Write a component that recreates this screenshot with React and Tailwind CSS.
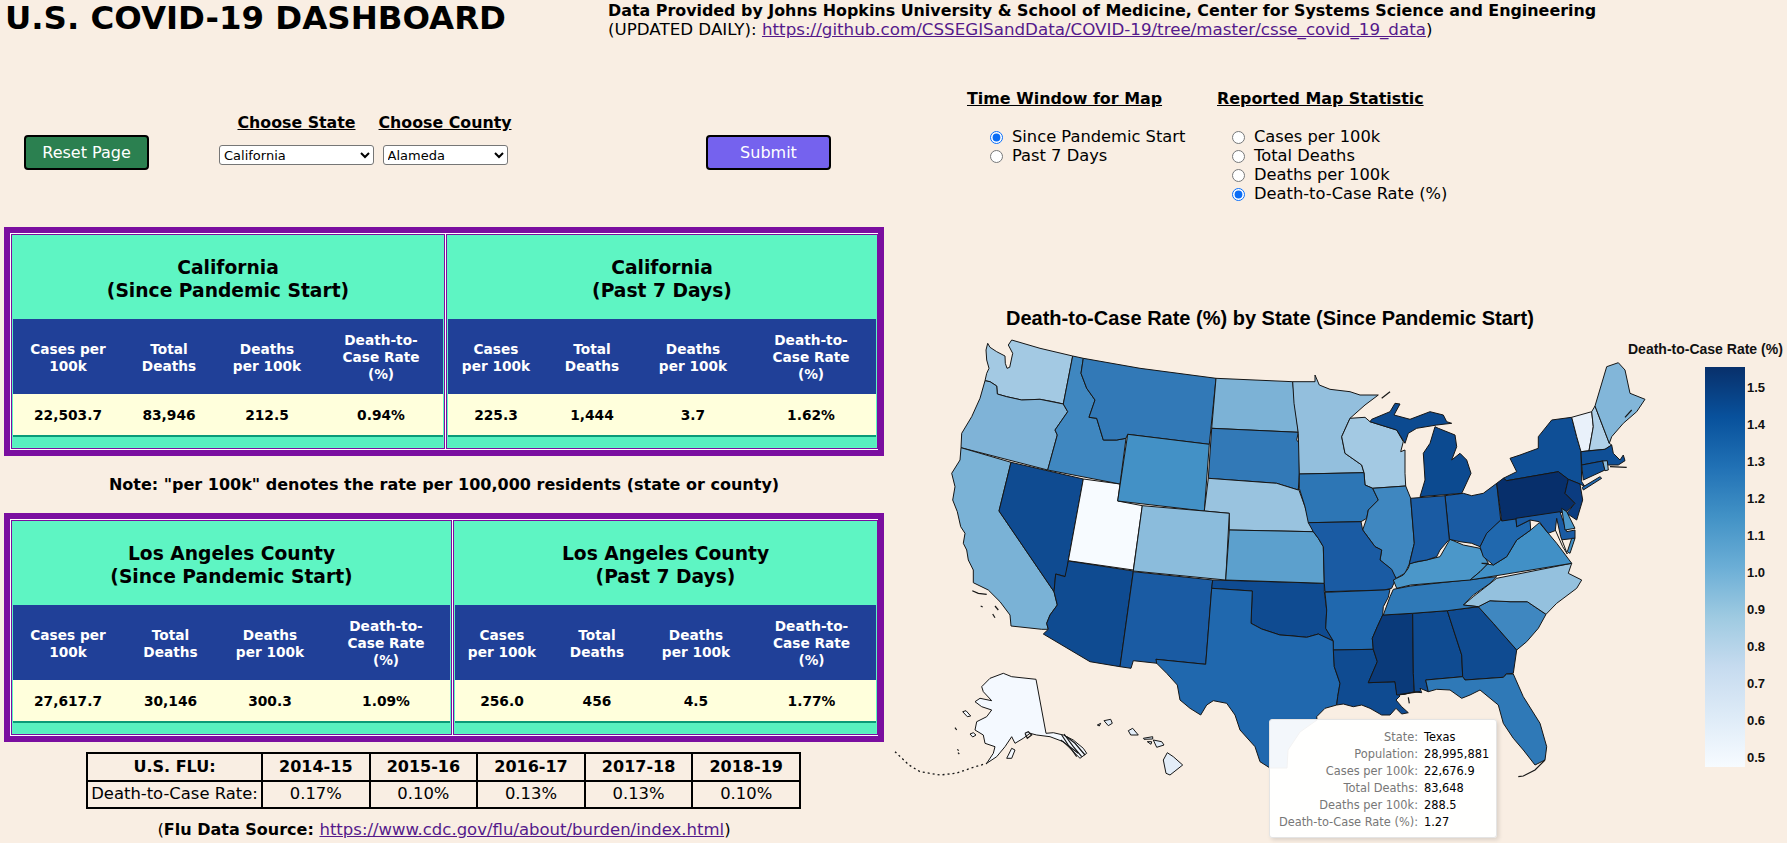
import React from "react";

const origins = { A: [940, 330], B: [1290, 330], C: [940, 560], D: [1290, 560] };

// outlines were traced on four crops of the map, the letter says which crop
const toPoints = (s) => {
    let o = origins.A;
    const out = [];
    s.trim().split(/\s+/).forEach((t) => {
        if (origins[t]) {
            o = origins[t];
        } else {
            const [x, y] = t.split(",").map(Number);
            out.push(`${(o[0] + x / 3).toFixed(1)},${(o[1] + y / 3).toFixed(1)}`);
        }
    });
    return out.join(" ");
};

const states = [
    ["#a3c9e3", "A 143,40 150,52 170,65 195,78 196,100 201,115 209,112 218,70 205,45 215,30 300,55 398,78 370,222 340,215 300,208 245,210 200,200 172,192 170,168 150,155 135,152 140,130 147,115 140,90 138,60"],
    ["#7fb3d7", "A 135,152 150,155 170,168 172,192 200,200 245,210 300,208 370,222 383,245 345,300 352,315 323,420 63,353 65,310 95,260 120,205"],
    ["#7ab2d6", "A 63,353 213,397 177,543 C 342,95 352,135 330,165 320,190 325,208 305,208 213,198 210,165 180,125 145,90 100,68 100,30 85,0 A 80,660 70,640 75,610 62,590 52,545 38,510 45,470 35,430 60,390"],
    ["#0f4b91", "A 213,397 430,447 385,692 C 378,50 347,42 342,95 A 177,543"],
    ["#f7fbff", "A 430,447 540,462 533,513 607,527 580,720 385,692"],
    ["#0f4b91", "C 385,3 580,33 540,320 450,305 310,222 325,208 320,190 330,165 352,135 342,95 347,42 375,50"],
    ["#1a5ba3", "C 580,35 818,60 815,85 797,313 648,298 652,310 580,302 573,325 540,320"],
    ["#0f4b91", "C 818,60 D 103,70 103,95 110,150 107,205 130,243 85,222 50,232 0,227 C 1020,225 965,207 933,190 937,93 815,85"],
    ["#2068ae", "C 815,85 937,93 933,190 965,207 1020,225 D 0,227 50,232 85,222 130,243 133,320 150,370 143,410 140,435 105,445 80,470 A 1131,1170 1080,1206 1044,1260 1041,1314 990,1314 C 960,605 945,560 900,510 885,465 860,430 820,422 800,435 782,465 750,445 720,420 712,375 680,340 650,310 648,298 797,313"],
    ["#3f87c0", "A 398,78 430,85 423,130 440,175 465,210 447,262 470,265 490,330 530,330 558,325 540,462 323,420 352,315 345,300 383,245 370,222"],
    ["#3279b7", "A 430,85 600,115 828,145 808,343 563,313 558,325 530,330 490,330 470,265 447,262 465,210 440,175 423,130"],
    ["#4391c6", "A 563,313 808,343 793,543 533,513"],
    ["#7cb2d6", "A 828,145 1058,155 1065,220 1075,307 815,295"],
    ["#3279b7", "A 815,295 1075,307 1070,330 1078,340 1078,430 1075,480 1010,460 805,445"],
    ["#99c3df", "A 805,445 1010,460 1075,480 B 25,475 45,530 70,605 A 868,600 868,550 793,543"],
    ["#8bbcdc", "A 607,527 793,543 868,550 C 857,60 580,33"],
    ["#5ca0cd", "A 868,600 B 70,605 85,625 100,650 D 103,70 C 857,60"],
    ["#93bfdd", "B 8,155 75,155 75,135 88,165 120,178 180,185 210,195 265,195 225,225 180,265 155,320 165,370 215,405 222,428 28,432 25,310 12,220"],
    ["#a3c9e3", "B 180,265 225,262 240,275 320,300 340,335 332,365 345,360 345,430 347,468 248,475 225,465 222,428 215,405 165,370 155,320"],
    ["#2d76b5", "B 28,432 222,428 225,465 248,475 265,510 235,540 230,565 213,575 55,578 45,530 28,475"],
    ["#3f87c0", "B 248,475 347,468 362,505 373,640 358,702 D 358,12 345,40 318,55 300,25 270,0 B 270,690 275,660 255,650 218,600 230,565 235,540 265,510"],
    ["#1a5ba3", "B 55,578 213,575 218,600 255,650 275,660 270,690 305,718 D 318,55 305,85 282,90 105,95 103,70 B 100,650 85,625 70,605"],
    ["#2068ae", "D 105,97 282,90 300,88 295,112 280,140 278,165 262,200 247,235 250,268 130,270 130,243 107,205 110,150"],
    ["#0f4b91", "D 130,270 250,268 262,305 235,368 315,365 320,395 330,408 318,420 335,440 355,458 335,462 318,445 300,465 275,465 240,445 215,435 190,440 160,432 140,435 143,410 150,370 133,320"],
    ["#0a3a7a", "D 278,165 368,160 370,340 373,395 345,403 320,405 315,365 235,368 262,305 250,268 247,235 262,200"],
    ["#0f4b91", "D 368,160 472,152 515,285 518,350 407,360 415,395 390,385 395,398 373,395 370,340"],
    ["#0f4b91", "D 472,152 565,140 610,190 680,270 670,340 648,342 640,352 525,360 518,350 515,285"],
    ["#2f79b7", "D 407,360 518,350 525,360 640,352 650,342 670,342 700,410 750,490 770,560 765,600 735,615 700,570 670,535 640,490 625,435 570,390 540,405 515,415 480,390 440,388 415,395"],
    ["#3f87c0", "D 565,140 600,122 660,125 712,125 768,163 745,205 710,245 680,270 610,190"],
    ["#94c1de", "D 520,135 550,110 620,55 845,10 835,40 875,60 860,85 800,130 768,163 712,125 660,125 600,122 565,140"],
    ["#2f79b7", "D 280,165 300,110 310,88 362,78 620,50 600,70 550,105 520,135 565,140 472,152 368,160"],
    ["#4b97c9", "D 320,85 362,75 540,60 570,35 595,10 B 570,655 520,645 480,628 450,680 410,690 360,700 355,715 D 340,45 320,55 310,60"],
    ["#4190c6", "D 540,60 845,10 B 845,700 800,640 775,610 748,578 722,600 680,630 650,680 610,705 575,700 D 595,10 570,35"],
    ["#2068ae", "B 570,650 590,605 632,570 678,565 680,590 720,570 722,600 680,630 650,680 610,705 580,680"],
    ["#1a5ba3", "B 465,497 520,490 545,497 580,490 620,460 632,570 590,610 570,650 545,640 510,635 478,628"],
    ["#1a5ba3", "B 362,505 465,497 478,628 450,660 440,680 410,690 380,695 358,702 373,640"],
    ["#0c4a90", "B 390,500 405,450 400,370 420,340 435,290 445,295 495,315 500,350 485,390 510,370 530,390 543,430 520,480 515,490"],
    ["#0c4a90", "B 245,268 300,245 315,220 330,222 312,255 360,268 420,245 460,255 470,275 485,280 440,285 380,295 355,310 345,340 320,300 240,275"],
    ["#0f4f96", "B 640,445 680,425 660,385 690,375 745,355 745,320 785,270 845,262 860,320 873,365 875,455 885,470 870,462 835,448 805,425 650,452"],
    ["#072f6b", "B 620,460 640,445 650,452 805,425 835,448 825,490 855,520 830,545 635,573"],
    ["#0b3c80", "B 835,448 870,462 878,510 860,570 830,550 855,520 825,490"],
    ["#e9f1fa", "B 845,262 905,245 910,290 897,362 873,365 860,320"],
    ["#b0d0e8", "B 905,245 915,228 958,340 965,345 945,358 897,362 910,290"],
    ["#82b6d9", "B 915,228 950,110 985,98 1005,120 1020,190 1065,208 1040,245 1000,280 965,320 958,340"],
    ["#0f4f96", "B 873,365 945,358 965,345 970,370 990,390 1000,375 1005,392 985,405 955,405 938,393 875,405"],
    ["#0f4f96", "B 875,405 938,393 945,420 880,450"],
    ["#8cbcdc", "B 938,393 952,392 955,420 945,422"],
    ["#2068ae", "B 877,472 930,440 935,445 880,480"],
    ["#1a5ba3", "B 678,565 810,545 830,605 855,600 855,625 810,630 800,600 775,610 748,575 720,570 680,590"],
    ["#4b97c9", "B 815,535 830,545 855,595 825,600"],
    ["#4190c6", "B 832,665 845,625 855,625 840,670"],
    ["#f9eee3", "B 800,565 812,620 832,672 818,650 796,600"],
    // alaska and hawaii
    ["#f4f9ff", "C 125,380 150,355 190,340 215,350 288,358 318,520 340,518 370,525 400,540 430,565 440,580 420,595 395,570 370,545 330,530 290,525 270,520 250,535 225,550 215,530 195,560 170,590 140,610 160,580 165,560 135,550 130,525 105,510 110,485 140,470 155,450 125,440 105,425 120,415 155,422 130,395"],
    ["#f4f9ff", "C 200,595 215,565 225,570 215,595"],
    ["#f4f9ff", "C 68,455 78,452 92,468 82,470"],
    ["#f4f9ff", "C 90,522 100,518 108,525 98,531"],
    ["#e3edf8", "C 670,600 682,578 700,590 728,615 690,645 678,640"],
    ["#e3edf8", "C 640,540 665,545 672,555 650,562"],
    ["#e3edf8", "C 492,482 512,478 517,490 505,497"],
    ["#e3edf8", "C 565,512 578,505 595,525 572,525"],
    ["#e3edf8", "C 610,535 638,530 638,537 612,538"],
    ["#e3edf8", "C 622,545 635,545 633,553"],
    ["#e3edf8", "C 472,495 482,490 478,498"],
];

// dark scribbles: islands and broken coast that are mostly outline
const scribbles = [
    "C 365,525 385,555 410,590",
    "C 372,522 400,560 425,590",
    "C 380,530 405,550 435,585",
    "C 362,540 395,565 415,580",
    "C 255,520 265,515 275,525 262,535 255,520",
    "C 97,92 115,100 140,103",
    "C 122,138 128,141",
    "C 165,138 175,150",
    "C 158,162 165,173",
    "C 45,503 50,510",
    "C 52,568 56,572",
    "C 54,578 58,582",
    "D 685,650 700,648 735,630 765,600",
    "D 330,403 390,395",
    "B 1005,262 1025,240",
    "D 355,412 358,430",
    "B 275,205 300,185",
    "B 960,410 1010,412",
];

const chain = "C -135,575 -93,615 -60,635 0,645 48,640 100,622 141,610";

const ticks = ["1.5", "1.4", "1.3", "1.2", "1.1", "1.0", "0.9", "0.8", "0.7", "0.6", "0.5"];

const blues = ["#f7fbff", "#deebf7", "#c6dbef", "#9ecae1", "#6baed6", "#4292c6", "#2171b5", "#08519c", "#08306b"];

function UsMap() {
    return (
        <svg width="899" height="543" viewBox="888 300 899 543" className="block">
            <defs>
                <linearGradient id="bar" x1="0" y1="1" x2="0" y2="0">
                    {blues.map((c, i) => (
                        <stop key={c} offset={i / 8} stopColor={c} />
                    ))}
                </linearGradient>
            </defs>
            <text x="1006" y="325" fontFamily="Liberation Sans, sans-serif" fontWeight="700" fontSize="20" fill="#000">
                Death-to-Case Rate (%) by State (Since Pandemic Start)
            </text>
            {states.map(([fill, outline], i) => (
                <polygon key={i} points={toPoints(outline)} fill={fill} stroke="#161616" strokeWidth="1" strokeLinejoin="round" />
            ))}
            {scribbles.map((s, i) => (
                <polyline key={i} points={toPoints(s)} fill="none" stroke="#161616" strokeWidth="1.2" />
            ))}
            <polyline points={toPoints(chain)} fill="none" stroke="#161616" strokeWidth="1.3" strokeDasharray="2 3" />
            <text x="1628" y="354" fontFamily="Liberation Sans, sans-serif" fontWeight="700" fontSize="14" fill="#111">
                Death-to-Case Rate (%)
            </text>
            <rect x="1705" y="367" width="40" height="400" fill="url(#bar)" />
            {ticks.map((t, i) => (
                <text key={t} x="1747" y={392 + i * 37} fontFamily="Liberation Sans, sans-serif" fontWeight="700" fontSize="13" fill="#111">
                    {t}
                </text>
            ))}
        </svg>
    );
}

const tooltipRows = [
    ["State:", "Texas"],
    ["Population:", "28,995,881"],
    ["Cases per 100k:", "22,676.9"],
    ["Total Deaths:", "83,648"],
    ["Deaths per 100k:", "288.5"],
    ["Death-to-Case Rate (%):", "1.27"],
];

function Tooltip() {
    return (
        <div className="absolute left-[381px] top-[419px] w-[228px] h-[119px] bg-white/95 rounded-[3px] border border-[#e4e4e4] shadow-[2px_2px_4px_rgba(0,0,0,0.12)] pt-[9px] pl-[8px]">
            <div className="grid grid-cols-[140px_auto] gap-x-[6px] text-[11.4px] leading-[17px]">
                {tooltipRows.map(([k, v]) => (
                    <React.Fragment key={k}>
                        <div className="text-right text-[#777] whitespace-nowrap">{k}</div>
                        <div className="text-black whitespace-nowrap">{v}</div>
                    </React.Fragment>
                ))}
            </div>
        </div>
    );
}

const headers = {
    sinceA: ["Cases per\n100k", "Total\nDeaths", "Deaths\nper 100k", "Death-to-\nCase Rate\n(%)"],
    weekA: ["Cases\nper 100k", "Total\nDeaths", "Deaths\nper 100k", "Death-to-\nCase Rate\n(%)"],
};

function Panel({ title, sub, cols, heads, values, width }) {
    return (
        <div className={`${width} border border-[#7b0ea0] bg-[#5ef5c3] p-px`}>
            <div className="h-[83px] pt-[20px] text-center text-[18.7px] leading-[23px] font-bold text-black">
                {title}
                <br />
                {sub}
            </div>
            <div className={`grid ${cols} h-[75px] pt-[2px] bg-[#204098] text-white text-[13.7px] leading-[17px] font-bold text-center`}>
                {heads.map((h, i) => (
                    <div key={i} className="flex items-center justify-center whitespace-pre-line">
                        {h}
                    </div>
                ))}
            </div>
            <div className={`grid ${cols} h-[41px] pt-[2px] bg-[#ffffdc] text-black text-[13.8px] font-bold text-center`}>
                {values.map((v, i) => (
                    <div key={i} className="flex items-center justify-center">
                        {v}
                    </div>
                ))}
            </div>
            <div className="h-[2px] bg-[#0a9a78]"></div>
            <div className="h-[10px] bg-[#58f0bf]"></div>
        </div>
    );
}

function StatBox({ children }) {
    return (
        <div className="ml-[4px] w-[880px] border-[6px] border-[#7b0ea0] bg-white p-px flex gap-px">
            {children}
        </div>
    );
}

const fluYears = [
    ["2014-15", "0.17%"],
    ["2015-16", "0.10%"],
    ["2016-17", "0.13%"],
    ["2017-18", "0.13%"],
    ["2018-19", "0.10%"],
];

function FluTable() {
    return (
        <table className="ml-[86px] mt-[10px] w-[715px] table-fixed border-collapse text-black">
            <thead>
                <tr className="h-[28px] text-[16px]">
                    <th className="w-[175px] border-2 border-black font-bold">U.S. FLU:</th>
                    {fluYears.map(([y]) => (
                        <th key={y} className="border-2 border-black font-bold">
                            {y}
                        </th>
                    ))}
                </tr>
            </thead>
            <tbody>
                <tr className="h-[27px] text-[16.4px]">
                    <td className="border-2 border-black text-center whitespace-nowrap">Death-to-Case Rate:</td>
                    {fluYears.map(([y, v]) => (
                        <td key={y} className="border-2 border-black text-center">
                            {v}
                        </td>
                    ))}
                </tr>
            </tbody>
        </table>
    );
}

function Radio({ name, label, checked }) {
    return (
        <label className="flex items-center h-[19px] whitespace-nowrap text-[16.3px]">
            <input type="radio" name={name} defaultChecked={checked} className="w-[13px] h-[13px] mr-[9.5px] accent-[#0a6cf5]" />
            {label}
        </label>
    );
}

export default function App() {
    return (
        <div className="w-[1787px] h-[843px] overflow-hidden bg-[#f9eee3] text-black font-['DejaVu_Sans',Verdana,sans-serif]">
            <header className="flex h-[48px]">
                <h1 className="ml-[5px] w-[603px] text-[32.4px] leading-[37px] font-bold whitespace-nowrap">U.S. COVID-19 DASHBOARD</h1>
                <p className="mt-px text-[16.7px] leading-[19px] whitespace-nowrap">
                    <b className="text-[15.9px]">Data Provided by Johns Hopkins University &amp; School of Medicine, Center for Systems Science and Engineering</b>
                    <br />
                    (UPDATED DAILY):{" "}
                    <a href="#" className="text-[#551a8b] underline">
                        https://github.com/CSSEGISandData/COVID-19/tree/master/csse_covid_19_data
                    </a>
                    )
                </p>
            </header>
            <div className="flex">
                <div className="w-[888px]">
                    <div className="flex items-start h-[179px]">
                        <button className="ml-[24px] mt-[87px] w-[125px] h-[35px] pt-px bg-[#2b8050] border-2 border-black rounded-[4px] text-white text-[16px]">
                            Reset Page
                        </button>
                        <div className="ml-[70px] mt-[65px] w-[155px] flex flex-col items-center gap-[13px]">
                            <span className="text-[15.8px] leading-[19px] font-bold underline whitespace-nowrap">Choose State</span>
                            <select defaultValue="California" className="w-[155px] h-[20px] bg-white border border-[#767676] rounded-[3px] text-[13px]">
                                <option>California</option>
                                <option>Texas</option>
                            </select>
                        </div>
                        <div className="ml-[5px] mt-[65px] w-[132px] flex flex-col items-center gap-[13px]">
                            <span className="text-[15.8px] leading-[19px] font-bold underline whitespace-nowrap">Choose County</span>
                            <select defaultValue="Alameda" className="w-[125px] h-[20px] bg-white border border-[#767676] rounded-[3px] text-[13px]">
                                <option>Alameda</option>
                                <option>Los Angeles</option>
                            </select>
                        </div>
                        <button className="ml-[195px] mt-[87px] w-[125px] h-[35px] pt-px bg-[#7562ee] border-2 border-black rounded-[4px] text-white text-[16px]">
                            Submit
                        </button>
                    </div>
                    <StatBox>
                        <Panel
                            width="w-[434px]"
                            title="California"
                            sub="(Since Pandemic Start)"
                            cols="grid-cols-[110px_92px_104px_124px]"
                            heads={headers.sinceA}
                            values={["22,503.7", "83,946", "212.5", "0.94%"]}
                        />
                        <Panel
                            width="w-[432px]"
                            title="California"
                            sub="(Past 7 Days)"
                            cols="grid-cols-[96px_96px_106px_130px]"
                            heads={headers.weekA}
                            values={["225.3", "1,444", "3.7", "1.62%"]}
                        />
                    </StatBox>
                    <div className="h-[57px] flex items-center justify-center text-[16px] font-bold">
                        Note: "per 100k" denotes the rate per 100,000 residents (state or county)
                    </div>
                    <StatBox>
                        <Panel
                            width="w-[441px]"
                            title="Los Angeles County"
                            sub="(Since Pandemic Start)"
                            cols="grid-cols-[110px_95px_104px_128px]"
                            heads={headers.sinceA}
                            values={["27,617.7", "30,146", "300.3", "1.09%"]}
                        />
                        <Panel
                            width="w-[425px]"
                            title="Los Angeles County"
                            sub="(Past 7 Days)"
                            cols="grid-cols-[94px_96px_102px_129px]"
                            heads={headers.weekA}
                            values={["256.0", "456", "4.5", "1.77%"]}
                        />
                    </StatBox>
                    <FluTable />
                    <div className="h-[42px] flex items-center justify-center text-[16.5px] whitespace-pre">
                        (<b className="text-[16px]">Flu Data Source: </b>
                        <a href="#" className="text-[#551a8b] underline">
                            https://www.cdc.gov/flu/about/burden/index.html
                        </a>
                        )
                    </div>
                </div>
                <div className="w-[899px]">
                    <div className="h-[252px] pt-[41px] pl-[79px] flex text-[15.9px]">
                        <div className="w-[250px]">
                            <div className="h-[19px] leading-[19px] font-bold underline whitespace-nowrap">Time Window for Map</div>
                            <div className="mt-[20px] pl-[22.5px]">
                                <Radio name="win" label="Since Pandemic Start" checked />
                                <Radio name="win" label="Past 7 Days" />
                            </div>
                        </div>
                        <div>
                            <div className="h-[19px] leading-[19px] font-bold underline whitespace-nowrap">Reported Map Statistic</div>
                            <div className="mt-[20px] pl-[14.5px]">
                                <Radio name="stat" label="Cases per 100k" />
                                <Radio name="stat" label="Total Deaths" />
                                <Radio name="stat" label="Deaths per 100k" />
                                <Radio name="stat" label="Death-to-Case Rate (%)" checked />
                            </div>
                        </div>
                    </div>
                    <div className="relative h-[543px]">
                        <UsMap />
                        <Tooltip />
                    </div>
                </div>
            </div>
        </div>
    );
}
